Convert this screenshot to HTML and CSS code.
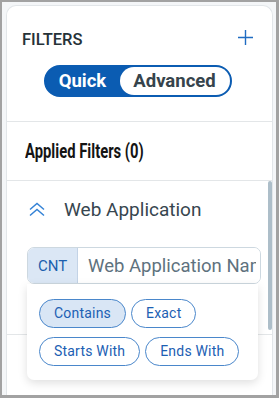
FILE: index.html
```html
<!DOCTYPE html>
<html lang="en">
<head>
    <meta charset="UTF-8">
    <meta name="viewport" content="width=device-width, initial-scale=1.0">
    <title>Filters</title>
    <link rel="stylesheet" href="styles.css">
</head>
<body>
    <div class="frame">
        <div class="panel">
            <div class="head">
                <div class="head-row">
                    <span class="head-title">FILTERS</span>
                    <svg class="add-icon" width="15" height="15" viewBox="0 0 15 15">
                        <path d="M7.5 0V15M0 7.5H15" stroke="#1f6cc2" stroke-width="1.4" fill="none"/>
                    </svg>
                </div>
                <div class="toggle">
                    <span class="seg seg-on">Quick</span>
                    <span class="seg seg-off">Advanced</span>
                </div>
            </div>
            <div class="applied"><span>Applied Filters (0)</span></div>
            <div class="list">
                <div class="thumb"></div>
                <div class="group">
                    <div class="group-head">
                        <svg width="18" height="15" viewBox="0 0 18 15">
                            <path d="M2 7.5L9 1.5L16 7.5M2 13.5L9 7.5L16 13.5" stroke="#3583d6" stroke-width="1.5" fill="none"/>
                        </svg>
                        <span>Web Application</span>
                    </div>
                    <div class="search">
                        <div class="search-box">
                            <span class="mode">CNT</span>
                            <input class="field" type="text" placeholder="Web Application Name">
                        </div>
                        <div class="menu">
                            <span class="chip chip-on">Contains</span>
                            <span class="chip">Exact</span>
                            <span class="chip">Starts With</span>
                            <span class="chip">Ends With</span>
                        </div>
                    </div>
                </div>
            </div>
        </div>
    </div>
</body>
</html>
```
FILE: styles.css
```css
*{
    box-sizing: border-box;
}
body{
    margin: 0;
    font-family: Roboto, "Liberation Sans", sans-serif;
}
.frame{
    width: 279px;
    height: 398px;
    border: solid #a2a2a2;
    border-width: 2px 3px 3px 2px;
    padding: 3px 3px 0 4px;
    background: #f4f6f8;
}
.panel{
    height: 100%;
    background: #fff;
    border: 1px solid #e2e6e9;
    border-bottom: none;
    border-radius: 10px 10px 0 0;
    overflow: hidden;
}
.head{
    padding: 23px 19px 24px 15px;
    border-bottom: 1px solid #e3e6e8;
}
.head-row{
    display: flex;
    justify-content: space-between;
    align-items: center;
    height: 20px;
}
.head-title{
    font-size: 16.5px;
    font-weight: 500;
    color: #263238;
}
.add-icon{
    margin-top: -3px;
}
.toggle{
    display: flex;
    width: 188px;
    height: 32px;
    margin: 16px auto 0;
    border: 2px solid #0b5cb2;
    border-radius: 16px;
    background: #0b5cb2;
}
.seg{
    display: flex;
    align-items: center;
    justify-content: center;
    font-size: 18.5px;
    font-weight: 700;
}
.seg-on{
    width: 74px;
    color: #fff;
}
.seg-off{
    flex: 1;
    background: #fff;
    color: #36444c;
    border-radius: 14px;
}
.applied{
    height: 59px;
    padding-left: 18px;
    line-height: 58px;
    font-size: 20px;
    font-weight: 700;
    color: #141414;
    border-bottom: 1px solid #e3e6e8;
}
.applied span{
    display: inline-block;
    transform: scaleX(0.74);
    transform-origin: left center;
}
.list{
    position: relative;
}
.thumb{
    position: absolute;
    top: 0;
    right: 0;
    width: 4px;
    height: 149px;
    border-radius: 2px;
    background: #adbec9;
}
.group{
    height: 154px;
    padding: 13px 11px 0 20px;
    border-bottom: 1px solid #e3e6e8;
}
.group-head{
    display: flex;
    align-items: center;
    gap: 18px;
    height: 30px;
    padding-left: 1px;
    font-size: 19px;
    color: #37464f;
}
.search{
    position: relative;
    margin-top: 23px;
}
.search-box{
    display: flex;
    height: 37px;
    border: 1px solid #cdd8e0;
    border-radius: 7px;
    overflow: hidden;
}
.mode{
    display: flex;
    align-items: center;
    justify-content: center;
    width: 50px;
    background: #dbe7f5;
    border-right: 1px solid #c3d3e6;
    color: #1c5fae;
    font-size: 15px;
}
.field{
    flex: 1;
    min-width: 0;
    padding: 0 4px 0 10px;
    border: none;
    outline: none;
    font-family: inherit;
    font-size: 18.5px;
    background: #fff;
}
.field::placeholder{
    color: #5e727e;
}
.menu{
    position: absolute;
    top: 100%;
    left: 0;
    width: 231px;
    display: flex;
    flex-wrap: wrap;
    gap: 9px 5px;
    padding: 15px 12px 14px;
    background: #fff;
    border-radius: 0 0 7px 7px;
    box-shadow: 0 3px 10px rgba(0, 0, 0, 0.13);
}
.chip{
    height: 29px;
    padding: 0 14px;
    border: 1px solid #4a87cb;
    border-radius: 15px;
    line-height: 27px;
    font-size: 14px;
    color: #1c60b3;
    letter-spacing: 0.2px;
}
.chip-on{
    background: #d9e6f5;
}
```
